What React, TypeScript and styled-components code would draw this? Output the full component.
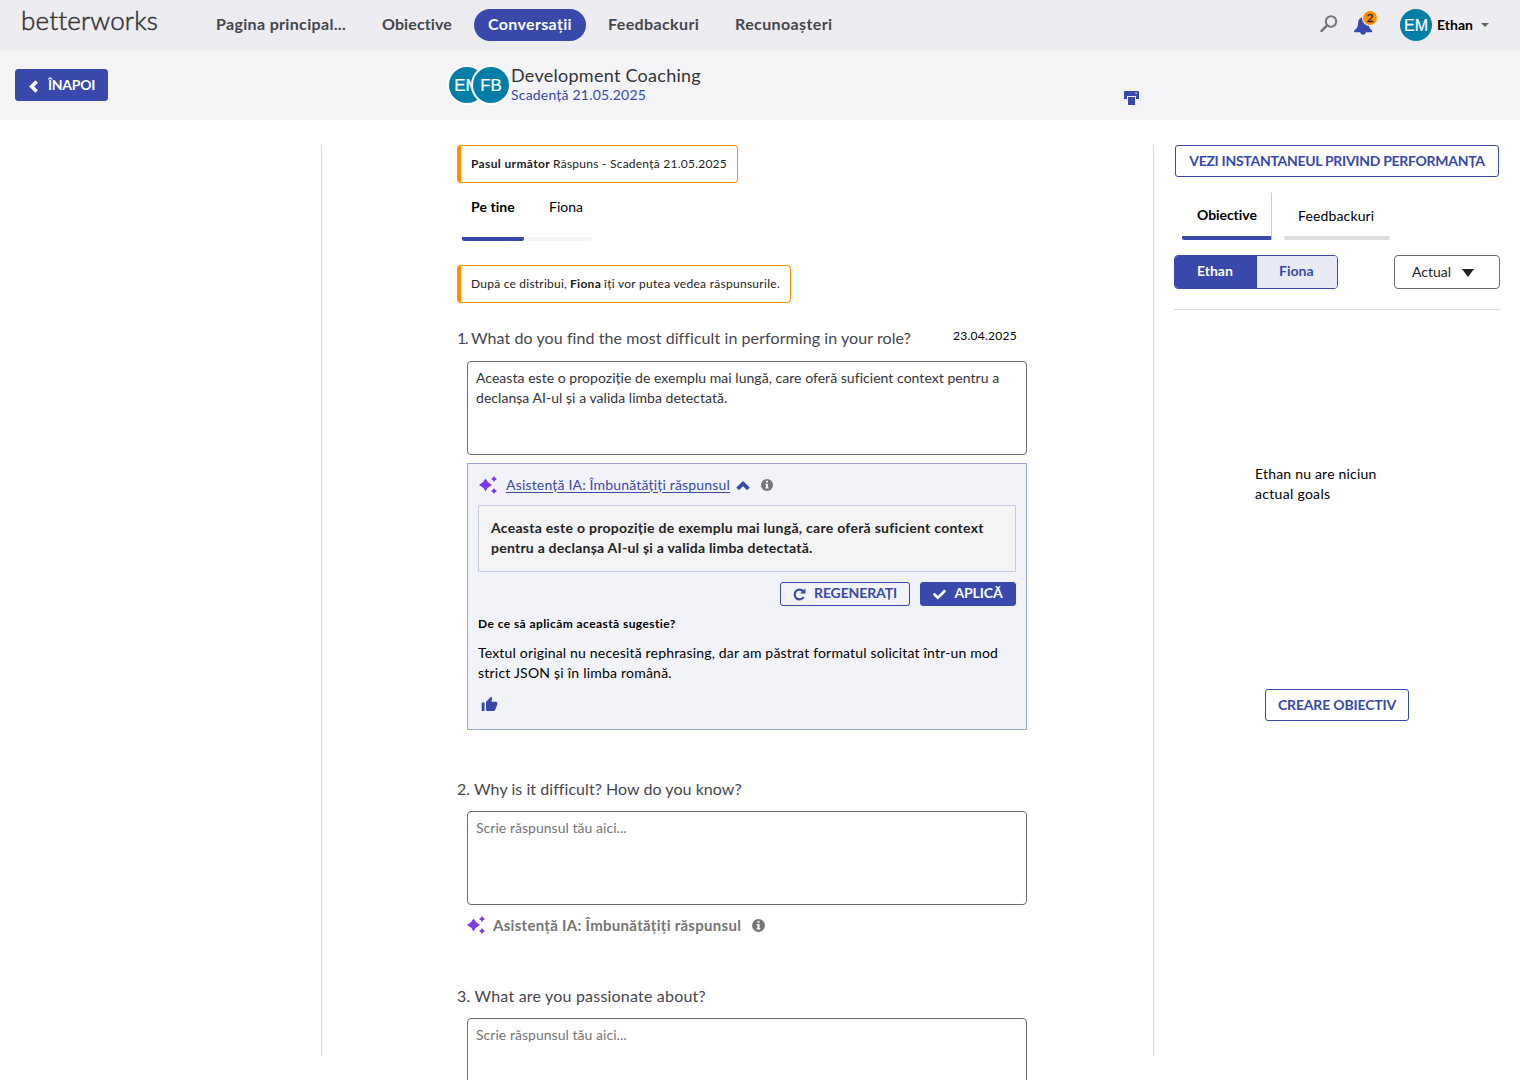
import React from "react";
import styled, { createGlobalStyle } from "styled-components";
import { FaCheck } from "react-icons/fa";
import { MdThumbUp } from "react-icons/md";

const INDIGO = "#3849ab";
const ORANGE = "#ff9100";
const TEAL = "#007ea7";
const GREY = "#757575";

const GlobalStyle = createGlobalStyle`
  *, *::before, *::after { box-sizing: border-box; }
  html, body { margin: 0; padding: 0; height: 100%; overflow: hidden; background: #fff; }
  body { font-family: Lato, "Open Sans", sans-serif; font-size: 14px; color: #000; }
  button, textarea { font-family: inherit; margin: 0; }
  svg { display: block; flex: none; }
`;

const Page = styled.div`
  width: 1520px;
  height: 1080px;
  overflow: hidden;
  display: flex;
  flex-direction: column;
`;

const Text = styled.span<{ $size?: number; $bold?: boolean; $ls?: number; $color?: string }>`
  font-size: ${(p) => p.$size ?? 14}px;
  font-weight: ${(p) => (p.$bold ? 700 : 400)};
  letter-spacing: ${(p) => p.$ls ?? 0}px;
  color: ${(p) => p.$color ?? "inherit"};
  white-space: nowrap;
`;

/* Top bar */
const TopBar = styled.header`
  flex: none;
  height: 50px;
  background: #edecf1;
  display: flex;
  align-items: center;
  padding-right: 31px;
`;

const Logo = styled.div`
  width: 180px;
  padding-left: 21px;
  margin-top: -10px;
  font-size: 26px;
  line-height: 32px;
  font-weight: 300;
  letter-spacing: 0.15px;
  color: #333;
  -webkit-text-stroke: 0.5px #333;
`;

const Nav = styled.nav`
  display: flex;
  align-items: center;
  gap: 8px;
  margin-left: 22px;
`;

const NavItem = styled.a<{ $width: number; $active?: boolean; $ls: number }>`
  width: ${(p) => p.$width}px;
  height: 32px;
  line-height: 30px;
  padding-left: 14px;
  border-radius: 16px;
  font-size: 16px;
  font-weight: 700;
  letter-spacing: ${(p) => p.$ls}px;
  white-space: nowrap;
  color: ${(p) => (p.$active ? "#fff" : "#46464c")};
  background: ${(p) => (p.$active ? INDIGO : "transparent")};
`;

const Tools = styled.div`
  margin-left: auto;
  display: flex;
  align-items: center;
`;

const SearchSlot = styled.div`
  margin: -2px 15px 0 0;
`;

const Bell = styled.div`
  position: relative;
  width: 20px;
  height: 20px;
  margin-right: 27px;
  margin-top: 2px;
`;

const Badge = styled.span`
  position: absolute;
  right: -4px;
  top: -5px;
  width: 14px;
  height: 14px;
  border-radius: 50%;
  background: ${ORANGE};
  box-shadow: 0 0 0 1px #f6f2ee;
  color: #222;
  font-size: 12px;
  font-weight: 400;
  -webkit-text-stroke: 0.3px #222;
  line-height: 13px;
  text-align: center;
`;

const Avatar = styled.span<{ $size: number; $ring?: boolean; $overlap?: number }>`
  flex: none;
  width: ${(p) => p.$size}px;
  height: ${(p) => p.$size}px;
  border-radius: 50%;
  background: ${TEAL};
  color: #fff;
  display: flex;
  align-items: center;
  justify-content: center;
  font-family: "Liberation Sans", Arial, sans-serif;
  font-size: ${(p) => (p.$ring ? 17 : 16)}px;
  line-height: 1;
  -webkit-text-stroke: 0.2px #fff;
  padding-top: ${(p) => (p.$ring ? 0 : 1)}px;
  box-shadow: ${(p) => (p.$ring ? "0 0 0 2px #fff" : "none")};
  margin-left: ${(p) => -(p.$overlap ?? 0)}px;
`;

const UserName = styled(Text)`
  margin: -2px 8px 0 5px;
`;

const Caret = styled.span<{ $w: number; $h: number; $color: string }>`
  border: ${(p) => p.$w / 2}px solid transparent;
  border-top: ${(p) => p.$h}px solid ${(p) => p.$color};
  border-bottom: 0;
`;

/* Title bar */
const TitleBar = styled.section`
  flex: none;
  height: 70px;
  background: #f4f4f7;
  display: flex;
  align-items: center;
  padding-left: 15px;
`;

const Button = styled.button<{ $solid?: boolean; $h: number; $w: number; $ls?: number; $gap?: number }>`
  flex: none;
  display: flex;
  align-items: center;
  justify-content: center;
  gap: ${(p) => p.$gap ?? 8}px;
  width: ${(p) => p.$w}px;
  height: ${(p) => p.$h}px;
  padding: 0 0 1px;
  border: 1px solid ${INDIGO};
  border-radius: 3px;
  background: ${(p) => (p.$solid ? INDIGO : "transparent")};
  color: ${(p) => (p.$solid ? "#fff" : INDIGO)};
  font-size: 14px;
  font-weight: 700;
  letter-spacing: ${(p) => p.$ls ?? 0}px;
  white-space: nowrap;
  svg { margin-top: 3px; }
`;

const SmallButton = styled(Button)`
  padding: 0 0 3px;
`;

const People = styled.div`
  display: flex;
  margin-left: 341px;
  width: 62px;
`;

const Titles = styled.div`
  display: flex;
  flex-direction: column;
  width: 613px;
  margin-top: -2px;
`;

const TitleLine = styled(Text)`line-height: 22px;`;
const DueLine = styled(Text)`line-height: 18px;`;

const PrintWrap = styled.div`padding-top: 26px;`;

/* Columns */
const Columns = styled.main`
  flex: 1;
  min-height: 0;
  display: grid;
  grid-template-columns: 321px 833px 366px;
`;

const Center = styled.section`
  padding: 0 0 0 135px;
  margin-top: 25px;
  height: 935px;
  overflow: hidden;
  border: solid #d9d9dc;
  border-width: 0 1px;
  border-image: linear-gradient(to bottom, #d9d9dc 910px, transparent 910px) 1;
`;

const Notice = styled.div<{ $w: number }>`
  width: ${(p) => p.$w}px;
  height: 38px;
  padding: 0 0 2px 10px;
  border: 1px solid ${ORANGE};
  border-left-width: 4px;
  border-radius: 4px;
  display: flex;
  align-items: center;
  gap: 3px;
  color: #222;
`;

const PersonTabs = styled.div`
  display: flex;
  height: 82px;
  padding-left: 5px;
`;

const PersonTab = styled.div<{ $w: number; $active?: boolean }>`
  width: ${(p) => p.$w}px;
  height: 58px;
  padding: 14px 0 0 9px;
  line-height: 20px;
  background: linear-gradient(${(p) => (p.$active ? INDIGO : "#f4f4f6")} 0 0) bottom / 100% 4px no-repeat;
  border-radius: 2px;
  & + & { padding-left: 25px; }
`;

const Question = styled.article<{ $gap: number }>`
  width: 570px;
  margin-top: ${(p) => p.$gap}px;
`;

const QuestionHead = styled.div<{ $h?: number }>`
  display: flex;
  height: ${(p) => p.$h ?? 32}px;
  line-height: 20px;
  color: #46464c;
`;

const Ordinal = styled(Text)`
  width: 14px;
`;

const DateText = styled(Text)`
  color: #000;
  margin: -2px 10px 0 auto;
`;

const Answer = styled.textarea`
  display: block;
  width: 560px;
  height: 94px;
  margin-left: 10px;
  padding: 6px 8px;
  border: 1px solid #6b6b6e;
  border-radius: 4px;
  resize: none;
  outline: none;
  background: #fff;
  font-size: 14px;
  line-height: 20px;
  letter-spacing: 0.04px;
  color: #333338;
  &::placeholder { color: ${GREY}; opacity: 1; }
`;

const Assist = styled.section`
  width: 560px;
  height: 267px;
  margin: 8px 0 0 10px;
  padding: 10px;
  border: 1px solid #9aa3d6;
  background: #f2f3f9;
`;

const AssistHead = styled.div`
  display: flex;
  align-items: center;
  height: 21px;
  padding-left: 1px;
  color: ${GREY};
`;

const AssistLink = styled(Text)`
  color: ${INDIGO};
  text-decoration: underline;
  text-underline-offset: 1.5px;
  margin: 0 6px 0 8px;
`;

const InfoSlot = styled.span`
  margin-left: 11px;
`;

const ThumbIcon = styled(MdThumbUp)`
  color: ${INDIGO};
  margin-left: 3px;
`;

const Suggestion = styled.div`
  height: 67px;
  margin-top: 10px;
  padding: 12px;
  border: 1px solid #c5cae9;
  border-radius: 1px;
  background: #f4f4f4;
  color: #222;
  line-height: 20px;
  display: flex;
  flex-direction: column;
`;

const Actions = styled.div`
  display: flex;
  justify-content: flex-end;
  gap: 10px;
  margin-top: 10px;
`;

const Why = styled.div`
  display: flex;
  flex-direction: column;
  line-height: 20px;
  margin-top: 8px;
`;

const Reason = styled.div`
  display: flex;
  flex-direction: column;
  margin: 9px 0 13px;
`;

const AssistRow = styled.div`
  display: flex;
  align-items: center;
  height: 22px;
  margin: 9px 0 0 10px;
  color: ${GREY};
`;

const AssistLabel = styled(Text)`margin: 0 0 0 7px;`;

/* Side panel */
const Side = styled.aside`
  padding: 25px 20px 0 20px;
  display: flex;
  flex-direction: column;
`;

const SideTop = styled.div`padding-left: 1px;`;

const SideTabs = styled.div`
  display: flex;
  gap: 12px;
  padding: 15px 0 0 8px;
`;

const SideTab = styled.div<{ $w: number; $active?: boolean }>`
  width: ${(p) => p.$w}px;
  height: 48px;
  padding: ${(p) => (p.$active ? 13 : 14)}px 0 0 ${(p) => (p.$active ? 15 : 14)}px;
  line-height: 20px;
  border: 0 solid ${(p) => (p.$active ? "#c5cae9" : "#fafafa")};
  border-right-width: ${(p) => (p.$active ? 1 : 0)}px;
  border-bottom: 4px solid ${(p) => (p.$active ? INDIGO : "#dedede")};
  border-radius: 2px;
`;

const Filters = styled.div`
  display: flex;
  justify-content: space-between;
  height: 70px;
  padding-top: 15px;
  border-bottom: 1px solid #dcdcdc;
`;

const Toggle = styled.div`
  display: flex;
  width: 164px;
  height: 34px;
  border: 1px solid ${INDIGO};
  border-radius: 4px;
  overflow: hidden;
`;

const ToggleItem = styled.div<{ $w: number; $active?: boolean }>`
  width: ${(p) => p.$w}px;
  line-height: 30px;
  padding-left: 22px;
  background: ${(p) => (p.$active ? INDIGO : "#e8eaf6")};
  color: ${(p) => (p.$active ? "#fff" : INDIGO)};
`;

const Select = styled.div`
  width: 106px;
  height: 34px;
  border: 1px solid #6b6b6e;
  border-radius: 4px;
  display: flex;
  align-items: center;
  gap: 11px;
  padding: 0 0 1px 17px;
  color: #222;
  ${Caret} { margin-top: 3px; }
`;

const Empty = styled.div`
  display: flex;
  flex-direction: column;
  line-height: 20px;
  margin: 154px 0 185px 81px;
`;

const CreateWrap = styled.div`
  display: flex;
  justify-content: center;
`;

const Sparkles = () => (
  <svg width="19" height="18" viewBox="0 0 19 18" fill="#7c3aed">
    <path d="M6.500 2.600Q8.500 7 13 9Q8.500 11 6.500 15.400Q4.500 11 0 9Q4.500 7 6.500 2.600Z" />
    <path d="M15 0Q15.900 2.100 18 3Q15.900 3.900 15 6Q14.100 3.900 12 3Q14.100 2.100 15 0Z" />
    <path d="M15 12Q15.900 14.100 18 15Q15.900 15.900 15 18Q14.100 15.900 12 15Q14.100 14.100 15 12Z" />
  </svg>
);

const SearchIcon = () => (
  <svg width="18" height="18" viewBox="0 0 18 18" fill="none" stroke={GREY}>
    <circle cx="11" cy="6.500" r="5.200" strokeWidth="2" />
    <path d="M7.200 10.300L1.600 15.900" strokeWidth="2.600" strokeLinecap="round" />
  </svg>
);

const InfoIcon = ({ size }: { size: number }) => (
  <svg width={size} height={size} viewBox="0 0 12 12">
    <circle cx="6" cy="6" r="6" fill={GREY} />
    <path d="M5 1.800H7V3.500H5ZM4.300 4.700H7V8.300H7.700V9.600H4.300V8.300H5V6H4.300Z" fill="#f4f4f9" />
  </svg>
);

const BellIcon = () => (
  <svg width="20" height="20" viewBox="0 0 20 20" fill={INDIGO}>
    <path d="M10 1.200C6.700 1.500 5.200 4 5.100 7.200C5 10.500 4 12.500 1.300 14.500Q.6 16.200 1.800 16.300H18.500Q19.800 16.200 19 14.500C16.800 12.500 15.700 11 15.500 7.200C15.400 4 13 1.500 10 1.200Z" />
    <path d="M7.200 16H13Q12.500 18.800 10.100 18.800T7.200 16Z" />
  </svg>
);

const PrintIcon = () => (
  <svg width="15" height="14" viewBox="0 0 15 14">
    <path d="M0 1Q0 0 1 0H14Q15 0 15 1V8H12V5H3V8H0Z" fill={INDIGO} />
    <rect x="4" y="6" width="7" height="8" fill={INDIGO} />
    <rect x="11.200" y="1.200" width="1.800" height="1.800" fill="#a6aedb" />
  </svg>
);

const ChevronLeft = () => (
  <svg width="11" height="13" viewBox="0 0 11 13" fill="none" stroke="#fff" strokeWidth="3.600">
    <path d="M8.700 1.500L3.700 6.500L8.700 11.500" />
  </svg>
);

const ChevronUp = () => (
  <svg width="14" height="10" viewBox="0 0 14 10" fill="none" stroke={INDIGO} strokeWidth="3.600">
    <path d="M1.600 8.900L7 3.600L12.400 8.900" />
  </svg>
);

const Regenerate = () => (
  <svg width="13" height="13" viewBox="0 0 13 13">
    <path d="M10.300 3.300A4.900 4.900 0 1 0 10.700 9" fill="none" stroke={INDIGO} strokeWidth="2.200" />
    <path d="M12.500 .2V5.600H7.100Z" fill={INDIGO} />
  </svg>
);

const navItems = [
  { label: "Pagina principal...", width: 158, ls: 0.33 },
  { label: "Obiective", width: 98, ls: 0.12 },
  { label: "Conversații", width: 112, ls: 0.34, active: true },
  { label: "Feedbackuri", width: 119, ls: 0.38 },
  { label: "Recunoașteri", width: 125, ls: 0.38 },
];

export default function App() {
  return (
    <Page>
      <GlobalStyle />
      <TopBar>
        <Logo>betterworks</Logo>
        <Nav>
          {navItems.map((n) => (
            <NavItem key={n.label} $width={n.width} $ls={n.ls} $active={n.active}>{n.label}</NavItem>
          ))}
        </Nav>
        <Tools>
          <SearchSlot><SearchIcon /></SearchSlot>
          <Bell><BellIcon /><Badge>2</Badge></Bell>
          <Avatar $size={32}>EM</Avatar>
          <UserName $bold $ls={0.03}>Ethan</UserName>
          <Caret $w={8} $h={4} $color="#616161" />
        </Tools>
      </TopBar>

      <TitleBar>
        <Button $solid $h={32} $w={93} $ls={-0.3} $gap={9}><ChevronLeft />ÎNAPOI</Button>
        <People>
          <Avatar $size={36} $ring>EM</Avatar>
          <Avatar $size={36} $ring $overlap={12}>FB</Avatar>
        </People>
        <Titles>
          <TitleLine $size={18} $ls={0.27} $color="#333338">Development Coaching</TitleLine>
          <DueLine $ls={0.2} $color={INDIGO}>Scadență 21.05.2025</DueLine>
        </Titles>
        <PrintWrap><PrintIcon /></PrintWrap>
      </TitleBar>

      <Columns>
        <div />
        <Center>
          <Notice $w={281}>
            <Text $size={12} $bold $ls={0.36}>Pasul următor</Text>
            <Text $size={12} $ls={0.24}>Răspuns - Scadență 21.05.2025</Text>
          </Notice>
          <PersonTabs>
            <PersonTab $w={62} $active><Text $bold $ls={0.06}>Pe tine</Text></PersonTab>
            <PersonTab $w={68}><Text>Fiona</Text></PersonTab>
          </PersonTabs>
          <Notice $w={334}>
            <Text $size={12} $ls={0.23}>După ce distribui,</Text>
            <Text $size={12} $bold $ls={0.28}>Fiona</Text>
            <Text $size={12} $ls={0.28}>îți vor putea vedea răspunsurile.</Text>
          </Notice>

          <Question $gap={25}>
            <QuestionHead $h={33}>
              <Ordinal $size={16} $ls={-1.5}>1.</Ordinal>
              <Text $size={16} $ls={0.08}>What do you find the most difficult in performing in your role?</Text>
              <DateText $size={12} $ls={0.27}>23.04.2025</DateText>
            </QuestionHead>
            <Answer
              readOnly
              value="Aceasta este o propoziție de exemplu mai lungă, care oferă suficient context pentru a declanșa AI-ul și a valida limba detectată."
            />
            <Assist>
              <AssistHead>
                <Sparkles />
                <AssistLink $ls={0.18}>Asistență IA: Îmbunătățiți răspunsul</AssistLink>
                <ChevronUp />
                <InfoSlot><InfoIcon size={12} /></InfoSlot>
              </AssistHead>
              <Suggestion>
                <Text $bold $ls={0.28}>Aceasta este o propoziție de exemplu mai lungă, care oferă suficient context</Text>
                <Text $bold $ls={0.24}>pentru a declanșa AI-ul și a valida limba detectată.</Text>
              </Suggestion>
              <Actions>
                <SmallButton $h={24} $w={130} $ls={-0.12}><Regenerate />REGENERAȚI</SmallButton>
                <SmallButton $solid $h={24} $w={96} $ls={-0.13}><FaCheck size={13} />APLICĂ</SmallButton>
              </Actions>
              <Why>
                <Text $size={12} $bold $ls={0.42}>De ce să aplicăm această sugestie?</Text>
                <Reason>
                  <Text $ls={0.18}>Textul original nu necesită rephrasing, dar am păstrat formatul solicitat într-un mod</Text>
                  <Text $ls={0.22}>strict JSON și în limba română.</Text>
                </Reason>
              </Why>
              <ThumbIcon size={17} />
            </Assist>
          </Question>

          <Question $gap={49}>
            <QuestionHead><Text $size={16} $ls={0.05}>2. Why is it difficult? How do you know?</Text></QuestionHead>
            <Answer readOnly placeholder="Scrie răspunsul tău aici..." />
            <AssistRow>
              <Sparkles />
              <AssistLabel $size={15} $bold $ls={0.29}>Asistență IA: Îmbunătățiți răspunsul</AssistLabel>
              <InfoSlot><InfoIcon size={13} /></InfoSlot>
            </AssistRow>
          </Question>

          <Question $gap={50}>
            <QuestionHead><Text $size={16} $ls={0.2}>3. What are you passionate about?</Text></QuestionHead>
            <Answer readOnly placeholder="Scrie răspunsul tău aici..." />
          </Question>
        </Center>

        <Side>
          <SideTop>
            <Button $h={32} $w={324} $ls={-0.29}>VEZI INSTANTANEUL PRIVIND PERFORMANȚA</Button>
          </SideTop>
          <SideTabs>
            <SideTab $w={90} $active><Text $bold $ls={-0.06}>Obiective</Text></SideTab>
            <SideTab $w={106}><Text $ls={0.14}>Feedbackuri</Text></SideTab>
          </SideTabs>
          <Filters>
            <Toggle>
              <ToggleItem $w={82} $active><Text $bold>Ethan</Text></ToggleItem>
              <ToggleItem $w={80}><Text $bold>Fiona</Text></ToggleItem>
            </Toggle>
            <Select>
              <Text>Actual</Text>
              <Caret $w={13} $h={8} $color="#222" />
            </Select>
          </Filters>
          <Empty>
            <Text $ls={0.2}>Ethan nu are niciun</Text>
            <Text $ls={0.3}>actual goals</Text>
          </Empty>
          <CreateWrap>
            <Button $h={32} $w={144} $ls={-0.17}>CREARE OBIECTIV</Button>
          </CreateWrap>
        </Side>
      </Columns>
    </Page>
  );
}
